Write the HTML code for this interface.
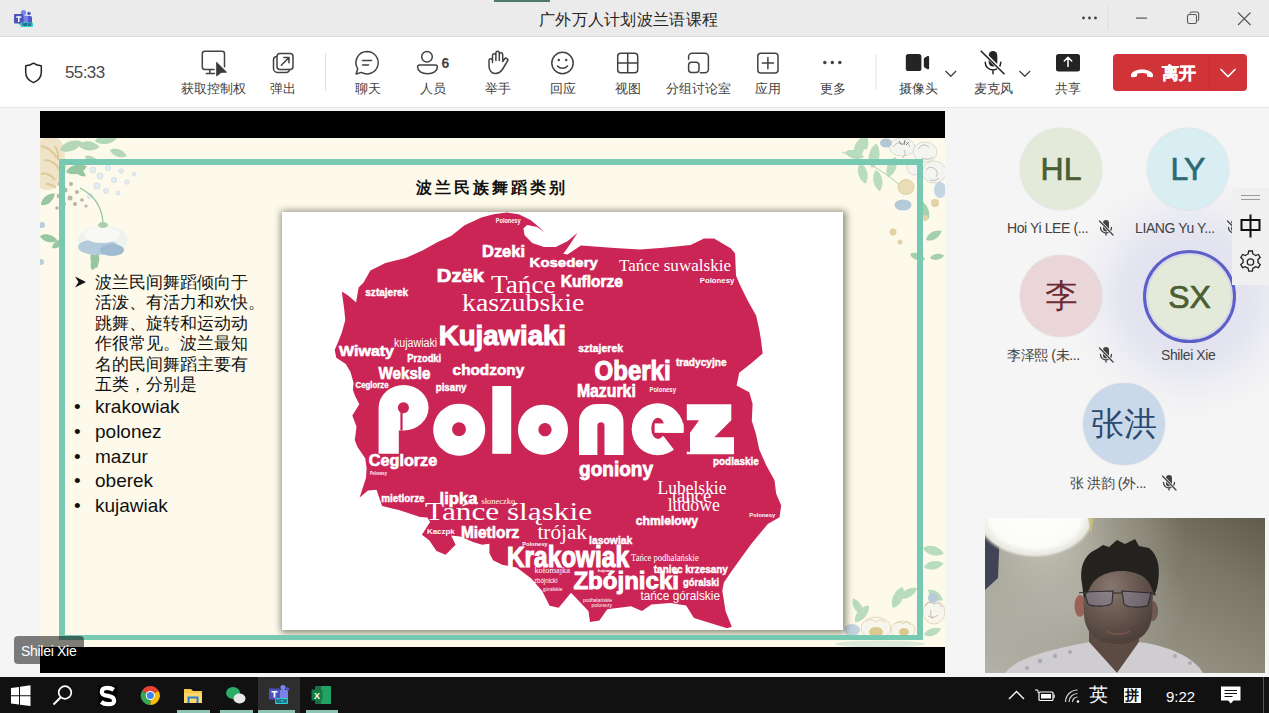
<!DOCTYPE html>
<html><head><meta charset="utf-8">
<style>
*{box-sizing:border-box;margin:0;padding:0}
html,body{width:1269px;height:713px;overflow:hidden}
body{position:relative;background:#f5f5f5;font-family:"Liberation Sans",sans-serif;color:#242424}
.abs{position:absolute}
#title{left:0;top:0;width:1269px;height:37px;background:#ebebeb;border-bottom:1px solid #dcdcdc}
#tbar{left:0;top:37px;width:1269px;height:71px;background:#fff;border-bottom:1px solid #e6e6e6}
.lbl{position:absolute;top:80px;font-size:13px;color:#424242;white-space:nowrap;transform:translateX(-50%);line-height:17px}
#task{left:0;top:677px;width:1269px;height:36px;background:#111}
.nm{position:absolute;font-size:14px;color:#424242;white-space:nowrap;line-height:16px;letter-spacing:-0.4px}
.av{position:absolute;border-radius:50%;text-align:center;box-shadow:0 0 2px rgba(0,0,0,0.12)}
</style></head>
<body>
<!-- title bar -->
<div id="title" class="abs">
  <div class="abs" style="left:494px;top:0;width:56px;height:1.5px;background:#4d7a6a"></div>
  <div class="abs" style="left:539px;top:9.5px;font-size:16px;color:#242424;letter-spacing:0.3px;line-height:20px">广外万人计划波兰语课程</div>
</div>
<svg class="abs" style="left:0;top:0" width="1269" height="37" viewBox="0 0 1269 37">
  <!-- teams logo -->
  <circle cx="23.5" cy="12.5" r="2.6" fill="#7b83eb"/>
  <circle cx="29" cy="13.5" r="1.8" fill="#5059c9"/>
  <rect x="25.5" y="16" width="6.5" height="8" rx="1.5" fill="#5059c9"/>
  <rect x="19" y="15.5" width="9" height="9.5" rx="1.5" fill="#7b83eb"/>
  <rect x="14" y="14" width="9.5" height="9.5" rx="1" fill="#4b53bc"/>
  <path d="M16.2,16.3h5.1v1.4h-1.8v4.3h-1.5v-4.3h-1.8z" fill="#fff"/>
  <rect x="20.5" y="22.5" width="12.5" height="4.6" rx="1" fill="#29d3c8"/>
  <text x="26.8" y="26.3" font-size="4" font-family="Liberation Sans" font-weight="bold" fill="#1b3a6b" text-anchor="middle">NEW</text>
  <!-- dots -->
  <circle cx="1083.5" cy="18" r="1.4" fill="#424242"/><circle cx="1089.5" cy="18" r="1.4" fill="#424242"/><circle cx="1095.5" cy="18" r="1.4" fill="#424242"/>
  <rect x="1107.5" y="6" width="1" height="24" fill="#dedede"/>
  <rect x="1136" y="17.5" width="11" height="1.2" fill="#5a5a5a"/>
  <rect x="1187.5" y="14.5" width="9" height="9" rx="1.8" fill="none" stroke="#5a5a5a" stroke-width="1.1"/>
  <path d="M1190,13.5 v-0.3 a1.5,1.5 0 0 1 1.5,-1.2 h5.2 a2,2 0 0 1 2,2 v5.2 a1.5,1.5 0 0 1 -1.2,1.5" fill="none" stroke="#5a5a5a" stroke-width="1.1"/>
  <path d="M1238,12.5 L1250.5,25 M1250.5,12.5 L1238,25" stroke="#5a5a5a" stroke-width="1.2"/>
</svg>

<!-- toolbar -->
<div id="tbar" class="abs"></div>
<div class="abs" style="left:65px;top:63px;font-size:17px;color:#4a4a4a;line-height:20px;letter-spacing:-0.6px">55:33</div>
<svg class="abs" style="left:0;top:37px" width="1269" height="70" viewBox="0 37 1269 70">
<g fill="none" stroke="#424242" stroke-width="1.5" stroke-linecap="round" stroke-linejoin="round">
  <!-- monitor -->
  <path d="M214,69.6 h-9.2 a2.5,2.5 0 0 1 -2.5,-2.5 v-13.3 a2.5,2.5 0 0 1 2.5,-2.5 h17.2 a2.5,2.5 0 0 1 2.5,2.5 v13"/>
  <path d="M209.8,70 v3.5 M206.3,73.6 h8"/>
  <!-- popout -->
  <rect x="277" y="53.5" width="16" height="16" rx="3"/>
  <path d="M276.5,56.5 a3.5,3.5 0 0 0 -3,3.5 v8.5 a4,4 0 0 0 4,4 h8.5 a3.5,3.5 0 0 0 3.5,-3"/>
  <path d="M281.3,65.3 l7.3,-7.3 M283.8,57.6 h5.2 v5.2"/>
  <!-- chat -->
  <path d="M367,51.5 a11.2,11.2 0 1 1 -5.6,20.9 l-5.3,1.6 1.6,-5.3 a11.2,11.2 0 0 1 9.3,-17.2 z"/>
  <path d="M362.5,60.5 h9 M362.5,65 h6"/>
  <!-- people -->
  <circle cx="427" cy="56.8" r="5.3"/>
  <path d="M417.6,67 a2,2 0 0 1 2,-2 h15.8 a2,2 0 0 1 2,2 c0,4 -4,6.7 -9.9,6.7 s-9.9,-2.7 -9.9,-6.7 z"/>
  <!-- hand -->
  <path transform="translate(2,0.5)" d="M490.5,62 v-7 a1.7,1.7 0 0 1 3.4,0 v5 M493.9,60 v-7.5 a1.7,1.7 0 0 1 3.4,0 v7.5 M497.3,60 v-6 a1.7,1.7 0 0 1 3.4,0 v6.5 M500.7,61 l1.8,-2.5 a1.8,1.8 0 0 1 3,2 l-4.5,7.5 c-2,3.5 -4,5 -7.5,5 h-0.5 c-3,0 -6,-3 -6,-7.5 v-5.5 a1.7,1.7 0 0 1 3.4,0"/>
  <!-- smiley -->
  <circle cx="562.5" cy="63" r="10.7"/>
  <path d="M557.5,66 a6.5,6.5 0 0 0 10,0"/></g><g fill="#424242"><circle cx="558.8" cy="60" r="1.2"/><circle cx="566.2" cy="60" r="1.2"/></g><g fill="none" stroke="#424242" stroke-width="1.5" stroke-linecap="round" stroke-linejoin="round">
  <!-- grid -->
  <rect x="617.7" y="53.2" width="20" height="19.6" rx="3"/>
  <path d="M627.7,53.5 v19 M618,63 h19.5"/>
  <!-- breakout -->
  <path d="M688.6,59.3 v-2.6 a3.5,3.5 0 0 1 3.5,-3.5 h12.8 a3.5,3.5 0 0 1 3.5,3.5 v12.6 a3.5,3.5 0 0 1 -3.5,3.5 h-4.6"/>
  <rect x="688.6" y="62.2" width="10.4" height="10.4" rx="3"/>
  <!-- apps -->
  <rect x="757.8" y="53.2" width="20.2" height="19.8" rx="3"/>
  <path d="M767.9,57.5 v11.2 M762.3,63.1 h11.2"/>
</g>
<text x="441.5" y="68" font-size="14" font-weight="bold" font-family="Liberation Sans" fill="#424242">6</text>
<path d="M216.6,62.3 L226.6,72.2 L221.3,72.4 L216.6,76 Z" fill="#3a3a3a" stroke="#3a3a3a" stroke-width="0.8" stroke-linejoin="round"/>
<circle cx="824.8" cy="62.5" r="1.75" fill="#424242"/><circle cx="832.3" cy="62.5" r="1.75" fill="#424242"/><circle cx="839.8" cy="62.5" r="1.75" fill="#424242"/>
<rect x="325" y="53.5" width="1" height="37" fill="#e0e0e0"/>
<rect x="875.5" y="54" width="1" height="36" fill="#e0e0e0"/>
<!-- camera -->
<rect x="905.8" y="54" width="15.6" height="17.1" rx="2.6" fill="#242424"/>
<path d="M923.8,59 a1.5,1.5 0 0 1 0.8,-1.3 l3,-1.6 a1,1 0 0 1 1.5,0.9 v11.3 a1,1 0 0 1 -1.5,0.9 l-3,-1.6 a1.5,1.5 0 0 1 -0.8,-1.3 z" fill="#242424"/>
<path d="M945.5,71 l5.3,5.3 5.3,-5.3" fill="none" stroke="#424242" stroke-width="1.3"/>
<!-- mic off -->
<rect x="988.7" y="51.1" width="8.6" height="15.5" rx="4.3" fill="#242424"/>
<path d="M985.2,62.2 a7.8,7.8 0 0 0 15.6,0 M993,70.2 v3.6" fill="none" stroke="#242424" stroke-width="1.5" stroke-linecap="round"/>
<path d="M982.3,51.5 l22.5,22.5" stroke="#fff" stroke-width="3.2"/>
<path d="M981.2,51.2 l22.8,22.6" stroke="#242424" stroke-width="1.6" stroke-linecap="round"/>
<path d="M1019.5,71 l5.3,5.3 5.3,-5.3" fill="none" stroke="#424242" stroke-width="1.3"/>
<!-- share -->
<rect x="1056" y="54" width="24" height="17.5" rx="2.5" fill="#242424"/>
<path d="M1068,66.5 v-9 M1064.3,61 l3.7,-3.7 3.7,3.7" fill="none" stroke="#fff" stroke-width="1.5" stroke-linecap="round" stroke-linejoin="round"/>
<!-- leave -->
<rect x="1113" y="54" width="134" height="37" rx="4" fill="#d13438"/>
<rect x="1209" y="54" width="1" height="37" fill="#c02d35"/>
<path d="M1131,75 c0,-3 5,-5.5 11,-5.5 s11,2.5 11,5.5 v1 a1.3,1.3 0 0 1 -1.5,1.3 l-3.5,-0.6 a1.3,1.3 0 0 1 -1.1,-1.4 v-1.5 c-1.5,-0.6 -3,-0.8 -4.9,-0.8 s-3.4,0.2 -4.9,0.8 v1.5 a1.3,1.3 0 0 1 -1.1,1.4 l-3.5,0.6 a1.3,1.3 0 0 1 -1.5,-1.3 z" fill="#fff"/>
<path d="M1220.5,69 l7.5,7.5 7.5,-7.5" fill="none" stroke="#fff" stroke-width="1.6"/>
</svg>
<div class="abs" style="left:1162px;top:63.5px;font-size:17px;font-weight:bold;color:#fff;line-height:20px;-webkit-text-stroke:0.4px #fff">离开</div>
<div class="lbl" style="left:213px">获取控制权</div>
<div class="lbl" style="left:283px">弹出</div>
<div class="lbl" style="left:368px">聊天</div>
<div class="lbl" style="left:433px">人员</div>
<div class="lbl" style="left:498px">举手</div>
<div class="lbl" style="left:563px">回应</div>
<div class="lbl" style="left:628px">视图</div>
<div class="lbl" style="left:698px">分组讨论室</div>
<div class="lbl" style="left:768px">应用</div>
<div class="lbl" style="left:833px">更多</div>
<div class="lbl" style="left:918px">摄像头</div>
<div class="lbl" style="left:993px">麦克风</div>
<div class="lbl" style="left:1068px">共享</div>
<svg class="abs" style="left:24px;top:62px" width="20" height="22" viewBox="0 0 20 22"><path d="M9.5,1.2 c2.5,1.8 5,2.5 7.8,2.6 v6.5 c0,5 -3,8.5 -7.8,10.3 c-4.8,-1.8 -7.8,-5.3 -7.8,-10.3 v-6.5 c2.8,-0.1 5.3,-0.8 7.8,-2.6 z" fill="none" stroke="#242424" stroke-width="1.5" stroke-linejoin="round"/></svg>

<!-- right panel glow -->
<div class="abs" style="left:1069px;top:176px;width:240px;height:240px;border-radius:50%;background:radial-gradient(circle at 50% 50%,rgba(205,205,235,0.7) 0,rgba(215,215,238,0.5) 40%,rgba(230,230,242,0.25) 60%,rgba(245,245,245,0) 72%)"></div>
<!-- stage slide -->
<div class="abs" style="left:40px;top:111px;width:905px;height:562px;background:#000"></div>
<div class="abs" id="slide" style="left:40px;top:138px;width:905px;height:509px;background:#fdfaeb;overflow:hidden">
<svg class="abs" style="left:-40px;top:-138px" width="1269" height="713" viewBox="0 0 1269 713">
<defs>
 <path id="lf" d="M0,0 C4,-5 13,-5 18,0 C13,5 4,5 0,0 Z"/>
 <path id="pt" d="M0,0 C-6,-4 -6,-14 0,-18 C6,-14 6,-4 0,0 Z"/>
</defs>
<!-- top-left cluster -->
<g>
 <g fill="#efe4c7">
  <ellipse cx="50" cy="152" rx="15" ry="16"/>
  <ellipse cx="47" cy="176" rx="14" ry="14"/>
  <ellipse cx="58" cy="165" rx="9" ry="12"/>
 </g>
 <path d="M41,146 q10,2 16,12 M44,160 q10,0 16,10 M41,174 q8,-2 14,6 M46,184 q6,0 10,4 M55,146 q4,6 3,14" stroke="#d8c38c" stroke-width="2" fill="none" opacity="0.8"/>
 <g fill="#acd4b2" opacity="0.9">
  <use href="#lf" transform="translate(60,150) rotate(-20) scale(1.3)"/>
  <use href="#lf" transform="translate(78,145) rotate(5) scale(1.2)"/>
  <use href="#lf" transform="translate(95,141) rotate(-10) scale(1.3)"/>
  <use href="#lf" transform="translate(110,150) rotate(20) scale(1)"/>
  <use href="#lf" transform="translate(85,156) rotate(30) scale(0.9)"/>
 </g>
 <g fill="#98c6a0">
  <use href="#lf" transform="translate(66,172) rotate(-15) scale(1.2)"/>
  <use href="#lf" transform="translate(74,168) rotate(35) scale(0.8)"/>
  <use href="#lf" transform="translate(41,205) rotate(-40) scale(1)"/>
  <use href="#lf" transform="translate(40,236) rotate(15) scale(1)"/>
  <use href="#lf" transform="translate(52,248) rotate(-35) scale(0.8)"/>
  <use href="#lf" transform="translate(92,270) rotate(-70) scale(1)"/>
  <use href="#lf" transform="translate(97,268) rotate(-110) scale(0.9)"/>
 </g>
 <g fill="#a6a39b" opacity="0.8">
  <circle cx="60" cy="184" r="2.2"/><circle cx="65" cy="190" r="2.5"/><circle cx="71" cy="184" r="2"/><circle cx="59" cy="196" r="2.3"/><circle cx="70" cy="198" r="2.5"/><circle cx="77" cy="192" r="2"/><circle cx="64" cy="204" r="2"/><circle cx="75" cy="204" r="2"/><circle cx="82" cy="200" r="1.8"/><circle cx="86" cy="206" r="1.6"/><circle cx="57" cy="208" r="1.8"/>
 </g>
 <g fill="#e4edf2" stroke="#cbd9e3" stroke-width="0.7">
  <circle cx="93" cy="170" r="3"/><circle cx="100" cy="176" r="3"/><circle cx="108" cy="168" r="2.6"/><circle cx="97" cy="186" r="3"/><circle cx="114" cy="180" r="2.6"/><circle cx="121" cy="171" r="2.2"/><circle cx="106" cy="191" r="2.5"/><circle cx="127" cy="182" r="2.2"/><circle cx="118" cy="193" r="2"/><circle cx="134" cy="174" r="2"/><circle cx="90" cy="196" r="2.5"/>
 </g>
 <path d="M80,188 C94,195 102,206 103,223" stroke="#90c29b" stroke-width="1.2" fill="none"/>
 <g>
  <ellipse cx="103" cy="240" rx="25" ry="14" fill="#eef3f1"/>
  <use href="#pt" transform="translate(96,252) rotate(-30)" fill="#f4f6f3"/>
  <use href="#pt" transform="translate(106,252) rotate(20)" fill="#f1f4f1"/>
  <ellipse cx="98" cy="247" rx="20" ry="8" fill="#b4cbdc"/>
  <ellipse cx="112" cy="250" rx="12" ry="6" fill="#9fbbd0"/>
  <ellipse cx="102" cy="235" rx="18" ry="8" fill="#f8f9f5"/>
  <ellipse cx="103" cy="225" rx="5" ry="3" fill="#a9cfae"/>
 </g>
 <g fill="#b8cfe0"><circle cx="42" cy="225" r="3"/><circle cx="41" cy="262" r="3"/></g>
</g>
<!-- top-right cluster -->
<g>
 <path d="M842,152 C860,160 880,166 905,190" stroke="#a9cfae" stroke-width="1" fill="none"/>
 <g fill="#b3d9ba" opacity="0.9">
  <use href="#lf" transform="translate(845,152) rotate(15) scale(1.1)"/>
  <use href="#lf" transform="translate(856,160) rotate(-75) scale(1.3)"/>
  <use href="#lf" transform="translate(860,163) rotate(75) scale(1.2)"/>
  <use href="#lf" transform="translate(872,168) rotate(-80) scale(1.4)"/>
  <use href="#lf" transform="translate(876,170) rotate(80) scale(1.2)"/>
  <use href="#lf" transform="translate(888,177) rotate(-70) scale(1.2)"/>
  <use href="#lf" transform="translate(866,150) rotate(-100) scale(1)"/>
 </g>
 <g fill="#a6d0ad">
  <use href="#lf" transform="translate(918,200) rotate(60) scale(1.2)"/>
  <use href="#lf" transform="translate(926,240) rotate(-30) scale(1)"/>
  <use href="#lf" transform="translate(910,254) rotate(20) scale(0.9)"/>
  <use href="#lf" transform="translate(930,258) rotate(-10) scale(0.8)"/>
 </g>
 <g fill="#f4f5f1" stroke="#cfd3cd" stroke-width="0.8">
  <ellipse cx="902" cy="147" rx="13" ry="9"/>
  <ellipse cx="925" cy="152" rx="12" ry="10"/>
  <ellipse cx="934" cy="172" rx="12" ry="11"/>
  <ellipse cx="915" cy="168" rx="8" ry="7"/>
 </g>
 <path d="M893,147 q4,-6 9,-3 q5,-4 8,3 M904,150 q3,5 -2,8 M918,149 q5,-7 11,-2 M922,158 q6,3 11,-1 M926,170 q4,-5 9,-1 q4,3 1,8 M930,180 q5,2 9,-2" stroke="#a9a79f" stroke-width="0.7" fill="none"/><path d="M899,141 l3,4 M905,140 l-1,5 M909,142 l-3,3" stroke="#7f7d77" stroke-width="1"/>
 <ellipse cx="886" cy="143" rx="6" ry="4.5" fill="#b4c6d4"/>
 <ellipse cx="940" cy="190" rx="6" ry="8" fill="#c3d4e2"/>
 <ellipse cx="906" cy="187" rx="8" ry="7.5" fill="#e9ddb8" stroke="#d5c390" stroke-width="0.7"/>
 <ellipse cx="903" cy="205" rx="8.5" ry="5.5" fill="#b6cad9"/>
 <g fill="#e3d3a4"><circle cx="935" cy="203" r="4"/><circle cx="925" cy="218" r="3"/><circle cx="893" cy="232" r="3.5"/><circle cx="900" cy="242" r="2.5"/></g>
</g>
<!-- bottom-right cluster -->
<g>
 <g fill="#b3d9ba" opacity="0.9">
  <use href="#lf" transform="translate(855,622) rotate(-50) scale(1.2)"/>
  <use href="#lf" transform="translate(862,614) rotate(-120) scale(1)"/>
  <use href="#lf" transform="translate(893,608) rotate(-65) scale(1.3)"/>
  <use href="#lf" transform="translate(900,598) rotate(-30) scale(1.1)"/>
  <use href="#lf" transform="translate(923,548) rotate(15) scale(1.2)"/>
  <use href="#lf" transform="translate(924,567) rotate(-10) scale(1.1)"/>
  <use href="#lf" transform="translate(928,590) rotate(35) scale(1)"/>
  <use href="#lf" transform="translate(924,635) rotate(-20) scale(1)"/>
 </g>
 <g fill="#f7f5ec" stroke="#ddd3b0" stroke-width="0.8">
  <ellipse cx="876" cy="628" rx="15" ry="11"/>
  <ellipse cx="903" cy="630" rx="12" ry="9"/>
  <ellipse cx="934" cy="612" rx="11" ry="12"/>
 </g>
 <path d="M925,606 q4,-6 9,-2 q5,-3 8,3 M928,616 q5,3 10,-1 M931,610 q-2,5 2,9" stroke="#a9a79f" stroke-width="0.7" fill="none"/><path d="M866,622 q5,-5 10,0 q5,-5 10,1 M895,624 q4,-4 8,0 q4,-4 8,1" stroke="#d5c79c" stroke-width="0.7" fill="none"/>
 <ellipse cx="876" cy="632" rx="7" ry="5" fill="#dcc98f"/>
 <ellipse cx="904" cy="632" rx="5" ry="4" fill="#dcc98f"/>
 <ellipse cx="852" cy="630" rx="8" ry="6" fill="#c3d4e0"/>
 <ellipse cx="933" cy="598" rx="5" ry="5" fill="#b9cad8"/>
 <ellipse cx="880" cy="644" rx="45" ry="3.5" fill="#cfe3d2" opacity="0.7"/>
</g>
</svg>

</div>
<div class="abs" style="left:416px;top:178px;font-family:'Liberation Serif',serif;font-weight:bold;font-size:16px;letter-spacing:3px;line-height:20px;color:#111">波兰民族舞蹈类别</div>
<div class="abs" style="left:282px;top:212px;width:561px;height:418px;background:#fff;box-shadow:1px 1px 7px 2px rgba(70,70,50,0.62)"></div>
<div class="abs" style="left:59px;top:159px;width:864px;height:481px;border:6px solid #78c9b1;border-bottom-width:5px"></div>
<div class="abs" style="left:95px;top:273px;width:175px;font-size:17px;line-height:20.4px;color:#111">波兰民间舞蹈倾向于<br>活泼、有活力和欢快。<br>跳舞、旋转和运动动<br>作很常见。波兰最知<br>名的民间舞蹈主要有<br>五类，分别是</div>
<svg class="abs" style="left:74px;top:275px" width="13" height="14" viewBox="0 0 13 14"><path d="M1,1.5 L12,7 L1,12.5 L4.5,7 Z" fill="#111"/></svg>
<div class="abs" style="left:74px;top:395px;font-size:19px;line-height:24.8px;color:#111">
<div style="position:relative;padding-left:21px"><span style="position:absolute;left:0;top:0">•</span>krakowiak</div>
<div style="position:relative;padding-left:21px"><span style="position:absolute;left:0;top:0">•</span>polonez</div>
<div style="position:relative;padding-left:21px"><span style="position:absolute;left:0;top:0">•</span>mazur</div>
<div style="position:relative;padding-left:21px"><span style="position:absolute;left:0;top:0">•</span>oberek</div>
<div style="position:relative;padding-left:21px"><span style="position:absolute;left:0;top:0">•</span>kujawiak</div>
</div>

<svg class="abs" style="left:0;top:0" width="1269" height="713" viewBox="0 0 1269 713">
<path d="M341.8,291.6 L348.5,295.8 L356.1,302.6 L358.6,287.4 L363.6,282.4 L370.4,270.6 L385.5,263.0 L405.7,258.0 L422.5,250.4 L437.7,242.0 L451.1,236.1 L464.6,225.2 L481.4,217.6 L493.5,214.3 L506.9,212.6 L518.7,214.3 L530.5,220.1 L538.9,226.9 L544.8,232.8 L537.2,226.9 L527.1,224.9 L523.4,228.6 L524.6,235.3 L532.2,242.9 L543.9,247.1 L555.7,247.1 L567.5,241.2 L577.6,232.8 L569.2,245.4 L563.3,253.8 L567.5,254.6 L580.9,245.4 L597.8,246.7 L614.6,247.9 L640.0,249.6 L663.6,247.7 L690.6,245.1 L704.0,238.4 L714.1,238.4 L731.0,248.5 L735.1,253.6 L736.0,275.4 L739.4,283.8 L747.8,300.7 L756.2,315.8 L759.5,331.0 L761.0,340.0 L762.7,353.5 L751.0,363.6 L739.2,372.8 L736.6,385.4 L749.3,392.2 L752.6,404.0 L751.8,420.8 L756.0,434.2 L759.4,450.0 L766.1,465.1 L774.5,480.3 L776.2,493.7 L781.2,505.5 L779.5,517.3 L767.8,524.0 L751.0,544.2 L732.4,570.0 L723.9,582.6 L722.3,590.4 L725.5,610.9 L731.8,626.7 L727.1,628.3 L694.0,618.0 L686.1,605.4 L670.3,603.0 L651.4,604.6 L642.0,610.9 L630.9,606.2 L607.3,609.3 L599.4,620.4 L590.0,622.0 L588.4,610.9 L571.0,592.8 L558.7,607.7 L549.6,605.8 L542.3,591.3 L531.3,578.5 L516.7,567.5 L502.1,564.8 L493.0,560.2 L489.4,553.0 L489.4,543.8 L482.1,544.7 L473.0,542.0 L460.2,536.5 L451.1,535.6 L455.6,544.7 L445.6,554.8 L436.5,551.1 L429.2,540.2 L421.9,534.7 L430.1,522.0 L427.4,517.4 L420.0,517.1 L398.9,510.1 L382.1,505.9 L376.5,489.8 L368.0,490.5 L359.6,497.5 L366.0,477.9 L366.6,468.0 L365.2,458.2 L357.5,447.0 L354.7,440.0 L355.1,437.9 L356.5,426.7 L352.3,415.4 L359.3,404.2 L355.1,396.0 L352.9,390.0 L353.6,383.0 L350.5,372.0 L345.8,364.0 L336.3,357.8 L334.7,350.0 L338.7,340.5 L341.8,332.6 L345.3,320.0 L344.3,310.0Z" fill="#cb2556"/>
<g fill="#fff">
<text x="495.8" y="223" font-size="6.5" font-family="Liberation Sans" font-weight="bold" textLength="24.7" lengthAdjust="spacingAndGlyphs">Polonesy</text>
<text x="482" y="257.4" font-size="17" font-family="Liberation Sans" font-weight="bold" stroke="#fff" stroke-width="0.68" textLength="43.0" lengthAdjust="spacingAndGlyphs">Dzeki</text>
<text x="529.6" y="266.5" font-size="13" font-family="Liberation Sans" font-weight="bold" stroke="#fff" stroke-width="0.52" textLength="68.2" lengthAdjust="spacingAndGlyphs">Kosedery</text>
<text x="436.8" y="281.5" font-size="18.6" font-family="Liberation Sans" font-weight="bold" stroke="#fff" stroke-width="0.74" textLength="47.2" lengthAdjust="spacingAndGlyphs">Dzëk</text>
<text x="491" y="292.5" font-size="25" font-family="Liberation Serif" textLength="64.7" lengthAdjust="spacingAndGlyphs">Tańce</text>
<text x="462" y="311" font-size="25" font-family="Liberation Serif" textLength="122.3" lengthAdjust="spacingAndGlyphs">kaszubskie</text>
<text x="560.8" y="286.6" font-size="17" font-family="Liberation Sans" font-weight="bold" stroke="#fff" stroke-width="0.68" textLength="62.2" lengthAdjust="spacingAndGlyphs">Kuflorze</text>
<text x="619" y="271.2" font-size="17.5" font-family="Liberation Serif" textLength="112.0" lengthAdjust="spacingAndGlyphs">Tańce suwalskie</text>
<text x="699.8" y="282.5" font-size="7.5" font-family="Liberation Sans" font-weight="bold" textLength="34.5" lengthAdjust="spacingAndGlyphs">Polonesy</text>
<text x="365.3" y="296" font-size="10" font-family="Liberation Sans" font-weight="bold" stroke="#fff" stroke-width="0.40" textLength="42.9" lengthAdjust="spacingAndGlyphs">sztajerek</text>
<text x="438.8" y="345" font-size="27" font-family="Liberation Sans" font-weight="bold" stroke="#fff" stroke-width="1.08" textLength="127.2" lengthAdjust="spacingAndGlyphs">Kujawiaki</text>
<text x="394" y="346.5" font-size="12" font-family="Liberation Sans" textLength="43.2" lengthAdjust="spacingAndGlyphs">kujawiaki</text>
<text x="339.1" y="356" font-size="15" font-family="Liberation Sans" font-weight="bold" stroke="#fff" stroke-width="0.60" textLength="54.9" lengthAdjust="spacingAndGlyphs">Wiwaty</text>
<text x="407.3" y="362.3" font-size="11.5" font-family="Liberation Sans" font-weight="bold" stroke="#fff" stroke-width="0.46" textLength="33.9" lengthAdjust="spacingAndGlyphs">Przodki</text>
<text x="378.6" y="379.3" font-size="17" font-family="Liberation Sans" font-weight="bold" stroke="#fff" stroke-width="0.68" textLength="51.8" lengthAdjust="spacingAndGlyphs">Weksle</text>
<text x="452.6" y="375" font-size="15.5" font-family="Liberation Sans" font-weight="bold" stroke="#fff" stroke-width="0.62" textLength="71.6" lengthAdjust="spacingAndGlyphs">chodzony</text>
<text x="355.5" y="387.6" font-size="9" font-family="Liberation Sans" font-weight="bold" stroke="#fff" stroke-width="0.36" textLength="33.0" lengthAdjust="spacingAndGlyphs">Ceglorze</text>
<text x="435.7" y="391" font-size="11" font-family="Liberation Sans" font-weight="bold" stroke="#fff" stroke-width="0.44" textLength="30.8" lengthAdjust="spacingAndGlyphs">pisany</text>
<text x="578.3" y="352" font-size="11" font-family="Liberation Sans" font-weight="bold" stroke="#fff" stroke-width="0.44" textLength="44.7" lengthAdjust="spacingAndGlyphs">sztajerek</text>
<text x="594.6" y="380.4" font-size="27" font-family="Liberation Sans" font-weight="bold" stroke="#fff" stroke-width="1.08" textLength="76.0" lengthAdjust="spacingAndGlyphs">Oberki</text>
<text x="675.9" y="365.5" font-size="10" font-family="Liberation Sans" font-weight="bold" stroke="#fff" stroke-width="0.40" textLength="50.8" lengthAdjust="spacingAndGlyphs">tradycyjne</text>
<text x="576.9" y="396.8" font-size="17.5" font-family="Liberation Sans" font-weight="bold" stroke="#fff" stroke-width="0.70" textLength="58.9" lengthAdjust="spacingAndGlyphs">Mazurki</text>
<text x="649.5" y="391.5" font-size="7" font-family="Liberation Sans" font-weight="bold" textLength="26.5" lengthAdjust="spacingAndGlyphs">Polonesy</text>
<text x="368.8" y="466" font-size="16" font-family="Liberation Sans" font-weight="bold" stroke="#fff" stroke-width="0.64" textLength="68.4" lengthAdjust="spacingAndGlyphs">Ceglorze</text>
<text x="370" y="475" font-size="5" font-family="Liberation Sans" font-weight="bold" textLength="16.8" lengthAdjust="spacingAndGlyphs">Polonesy</text>
<text x="579" y="476" font-size="20" font-family="Liberation Sans" font-weight="bold" stroke="#fff" stroke-width="0.80" textLength="74.0" lengthAdjust="spacingAndGlyphs">goniony</text>
<text x="713" y="465" font-size="11" font-family="Liberation Sans" font-weight="bold" stroke="#fff" stroke-width="0.44" textLength="45.7" lengthAdjust="spacingAndGlyphs">podlaskie</text>
<text x="657.6" y="493.7" font-size="19" font-family="Liberation Serif" textLength="68.9" lengthAdjust="spacingAndGlyphs">Lubelskie</text>
<text x="671.9" y="502" font-size="18" font-family="Liberation Serif" textLength="39.5" lengthAdjust="spacingAndGlyphs">tance</text>
<text x="667.7" y="511.4" font-size="18" font-family="Liberation Serif" textLength="52.1" lengthAdjust="spacingAndGlyphs">ludowe</text>
<text x="635.7" y="524.5" font-size="13" font-family="Liberation Sans" font-weight="bold" stroke="#fff" stroke-width="0.52" textLength="62.3" lengthAdjust="spacingAndGlyphs">chmielowy</text>
<text x="749.3" y="516.5" font-size="6" font-family="Liberation Sans" font-weight="bold" textLength="26.0" lengthAdjust="spacingAndGlyphs">Polonesy</text>
<text x="381.3" y="502" font-size="10" font-family="Liberation Sans" font-weight="bold" stroke="#fff" stroke-width="0.40" textLength="43.3" lengthAdjust="spacingAndGlyphs">mietlorze</text>
<text x="439.6" y="504" font-size="16" font-family="Liberation Sans" font-weight="bold" stroke="#fff" stroke-width="0.64" textLength="37.8" lengthAdjust="spacingAndGlyphs">lipka</text>
<text x="481.4" y="503.6" font-size="9" font-family="Liberation Serif" textLength="33.8" lengthAdjust="spacingAndGlyphs">słoneczko</text>
<text x="425" y="520" font-size="26" font-family="Liberation Serif" textLength="167.0" lengthAdjust="spacingAndGlyphs">Tańce śląskie</text>
<text x="427" y="533.5" font-size="8" font-family="Liberation Sans" font-weight="bold" textLength="27.6" lengthAdjust="spacingAndGlyphs">Kaczpk</text>
<text x="460.9" y="537.5" font-size="16.5" font-family="Liberation Sans" font-weight="bold" stroke="#fff" stroke-width="0.66" textLength="58.3" lengthAdjust="spacingAndGlyphs">Mietlorz</text>
<text x="537.4" y="539" font-size="21" font-family="Liberation Serif" textLength="49.6" lengthAdjust="spacingAndGlyphs">trójak</text>
<text x="522.3" y="546" font-size="6" font-family="Liberation Sans" font-weight="bold" textLength="25.2" lengthAdjust="spacingAndGlyphs">Polonesy</text>
<text x="507" y="567" font-size="29" font-family="Liberation Sans" font-weight="bold" stroke="#fff" stroke-width="1.16" textLength="122.0" lengthAdjust="spacingAndGlyphs">Krakowiak</text>
<text x="589" y="544" font-size="11" font-family="Liberation Sans" font-weight="bold" stroke="#fff" stroke-width="0.44" textLength="43.4" lengthAdjust="spacingAndGlyphs">lasowiak</text>
<text x="631" y="560.5" font-size="10" font-family="Liberation Serif" textLength="67.7" lengthAdjust="spacingAndGlyphs">Tańce podhalańskie</text>
<text x="534.4" y="573" font-size="9" font-family="Liberation Serif" textLength="35.6" lengthAdjust="spacingAndGlyphs">kołomajka</text>
<text x="534" y="583" font-size="7" font-family="Liberation Sans" textLength="23.5" lengthAdjust="spacingAndGlyphs">zbójnicki</text>
<text x="542.8" y="591" font-size="6" font-family="Liberation Sans" textLength="19.8" lengthAdjust="spacingAndGlyphs">góralskie</text>
<text x="597.8" y="572.3" font-size="4" font-family="Liberation Sans" font-weight="bold" textLength="14.2" lengthAdjust="spacingAndGlyphs">hajnan</text>
<text x="653.8" y="573" font-size="11" font-family="Liberation Sans" font-weight="bold" stroke="#fff" stroke-width="0.44" textLength="74.0" lengthAdjust="spacingAndGlyphs">taniec krzesany</text>
<text x="573.4" y="589" font-size="23" font-family="Liberation Sans" font-weight="bold" stroke="#fff" stroke-width="0.92" textLength="105.6" lengthAdjust="spacingAndGlyphs">Zbójnicki</text>
<text x="683" y="585.5" font-size="11" font-family="Liberation Sans" font-weight="bold" stroke="#fff" stroke-width="0.44" textLength="36.2" lengthAdjust="spacingAndGlyphs">góralski</text>
<text x="640.4" y="600" font-size="12" font-family="Liberation Sans" textLength="79.6" lengthAdjust="spacingAndGlyphs">tańce góralskie</text>
<text x="582.9" y="601.5" font-size="5" font-family="Liberation Sans" textLength="29.1" lengthAdjust="spacingAndGlyphs">podhalańskie</text>
<text x="591.5" y="606.5" font-size="5" font-family="Liberation Sans" textLength="20.5" lengthAdjust="spacingAndGlyphs">polonezy</text>
</g>
<g fill="#fff">
<path fill-rule="evenodd" d="M378.6,453.8 L378.6,407.7 A25,22.7 0 1 1 403.6,430.4 L398.8,430.4 L398.8,453.8 Z M403.4,402.2 a5.5,5.5 0 1 0 0.01,0 Z"/>
<rect x="400.4" y="407" width="2.2" height="23.4" fill="#cb2556"/>
<path fill-rule="evenodd" d="M459.2,403.7 a26,26 0 1 0 0.01,0 Z M459,422.3 a6.9,6.9 0 1 1 -0.01,0 Z"/>
<rect x="492.3" y="386" width="18.9" height="67.8"/>
<path fill-rule="evenodd" d="M543,404.7 a25,25 0 1 0 0.01,0 Z M545,423.1 a6.6,6.6 0 1 1 -0.01,0 Z"/>
<path d="M579,455 L579,422 A18,18 0 0 1 597,404 L605.5,404 A18,18 0 0 1 623.5,422 L623.5,455 L604.5,455 L604.5,425.7 A3.55,3.55 0 0 0 597.4,425.7 L597.4,455 Z"/>
<circle cx="657.7" cy="429.3" r="26"/>
<path d="M686.8,404.2 L731.3,404.2 L731.3,420.3 L714.3,437.3 L734,437.3 L734,454.3 L686.8,454.3 L686.8,437.3 L699.1,420.3 L686.8,420.3 Z"/>
</g>
<ellipse cx="658" cy="428.4" rx="6.7" ry="10.7" fill="#cb2556"/>
<path d="M660,432.8 L690,432.8 L690,452 L674,449.8 L664.6,437.6 Z" fill="#cb2556"/>
<rect x="654.6" y="423.4" width="28.9" height="9.4" fill="#fff"/>

</svg>
<div class="av" style="left:1020px;top:128px;width:82px;height:82px;background:#e4ead9;color:#4a5e33;font-size:32px;-webkit-text-stroke:0.7px #4a5e33;line-height:83px">HL</div>
<div class="av" style="left:1147px;top:128px;width:82px;height:82px;background:#d9eef2;color:#2e6b74;font-size:32px;-webkit-text-stroke:0.7px #2e6b74;line-height:83px;letter-spacing:-2px;text-indent:-2px">LY</div>
<div class="av" style="left:1020px;top:255px;width:82px;height:82px;background:#ead5d9;color:#6b2a36;font-size:33px;line-height:82px">李</div>
<div class="abs" style="left:1143px;top:250px;width:93px;height:93px;border-radius:50%;border:3px solid #5b5fc7;background:#d8d8e6"></div>
<div class="av" style="left:1148px;top:255px;width:83px;height:83px;background:#e4ead9;color:#4a5e33;font-size:32px;-webkit-text-stroke:0.7px #4a5e33;line-height:84px;box-shadow:none">SX</div>
<div class="av" style="left:1083px;top:383px;width:82px;height:82px;background:#cad9ea;color:#2c4a70;font-size:33px;line-height:82px">张洪</div>
<div class="nm" style="left:1007px;top:220px">Hoi Yi LEE (...</div>
<div class="nm" style="left:1135px;top:220px">LIANG Yu Y...</div>
<div class="nm" style="left:1007px;top:347px">李泽熙 (未...</div>
<div class="nm" style="left:1161px;top:347px">Shilei Xie</div>
<div class="nm" style="left:1070px;top:475px">张 洪韵 (外...</div>
<svg class="abs" style="left:0;top:0" width="1269" height="713" viewBox="0 0 1269 713">
 <defs><g id="micoff">
  <path d="M4,2.5 a3,3 0 0 1 6,0 v5.5 a3,3 0 0 1 -6,0 z" fill="#424242"/>
  <path d="M1.5,7 a5.5,5.5 0 0 0 11,0 M7,12.5 v2" fill="none" stroke="#424242" stroke-width="1.3" stroke-linecap="round"/>
  <path d="M0.5,0.5 l13.5,14" stroke="#f5f5f5" stroke-width="2.6"/>
  <path d="M0.5,0.5 l13.5,14" stroke="#424242" stroke-width="1.3" stroke-linecap="round"/>
 </g></defs>
 <use href="#micoff" x="1099" y="220.5"/>
 <use href="#micoff" x="1099" y="347.5"/>
 <use href="#micoff" x="1162" y="475.5"/>
 <use href="#micoff" x="1227" y="220.5"/>
</svg>
<div class="abs" style="left:1232px;top:188px;width:37px;height:97px;background:#f0f0f0"></div>
<svg class="abs" style="left:1232px;top:188px" width="37" height="97" viewBox="1232 188 37 97">
 <path d="M1241,195.5 h19 M1241,199.5 h19" stroke="#9a9a9a" stroke-width="1"/>
 <path d="M1241.5,220 h18 v10 h-18 z M1250.5,214.5 v23" fill="none" stroke="#111" stroke-width="2"/>
 <g transform="translate(1250.5,262)" fill="none" stroke="#222" stroke-width="1.3">
  <path d="M-1.8,-11 h3.6 l0.6,3 a8,8 0 0 1 2.6,1.5 l2.9,-1 1.8,3.1 -2.3,2 a8,8 0 0 1 0,3 l2.3,2 -1.8,3.1 -2.9,-1 a8,8 0 0 1 -2.6,1.5 l-0.6,3 h-3.6 l-0.6,-3 a8,8 0 0 1 -2.6,-1.5 l-2.9,1 -1.8,-3.1 2.3,-2 a8,8 0 0 1 0,-3 l-2.3,-2 1.8,-3.1 2.9,1 a8,8 0 0 1 2.6,-1.5 z"/>
  <circle r="3.2"/>
 </g>
</svg>

<svg class="abs" style="left:985px;top:518px" width="280" height="155" viewBox="0 0 280 155">
<defs>
 <linearGradient id="vbg" x1="0" y1="1" x2="1" y2="0">
  <stop offset="0" stop-color="#b6b4aa"/><stop offset="0.4" stop-color="#939082"/><stop offset="0.75" stop-color="#7a7767"/><stop offset="1" stop-color="#5f5c4d"/>
 </linearGradient>
 <radialGradient id="vlight" cx="0.28" cy="0.55" r="0.45">
  <stop offset="0" stop-color="#b5b4ab" stop-opacity="0.7"/><stop offset="1" stop-color="#b5b4ab" stop-opacity="0"/>
 </radialGradient>
 <radialGradient id="lamp" cx="0.5" cy="0.4" r="0.55">
  <stop offset="0" stop-color="#ffffff"/><stop offset="0.75" stop-color="#fbfbf8"/><stop offset="0.92" stop-color="#e6e6de"/><stop offset="1" stop-color="#b0afa4" stop-opacity="0"/>
 </radialGradient>
 <radialGradient id="face" cx="0.4" cy="0.3" r="0.7">
  <stop offset="0" stop-color="#85766e"/><stop offset="0.5" stop-color="#6a5a52"/><stop offset="1" stop-color="#4d403a"/>
 </radialGradient>
<radialGradient id="lglow" gradientUnits="userSpaceOnUse" cx="60" cy="10" r="140">
  <stop offset="0" stop-color="#d8d7cc" stop-opacity="0.85"/><stop offset="0.5" stop-color="#bdbbae" stop-opacity="0.45"/><stop offset="1" stop-color="#bdbbae" stop-opacity="0"/>
 </radialGradient>
</defs>
<rect width="280" height="155" fill="url(#vbg)"/>
<rect width="280" height="155" fill="url(#vlight)"/>
<rect width="280" height="155" fill="url(#lglow)"/>
<path d="M0,14 L15,10 L13,60 L0,72 Z" fill="#34384f" opacity="0.9"/>
<ellipse cx="50" cy="4" rx="56" ry="41" fill="url(#lamp)"/>
<path d="M103,0 L109,0 L106,18 Z" fill="#cbbb7a" opacity="0.8"/>
<path d="M104,112 L154,112 L154,124 L132,155 L104,124 Z" fill="#5c4b43"/>
<ellipse cx="95" cy="88" rx="5.5" ry="11" fill="#9a6258"/>
<ellipse cx="168" cy="93" rx="5" ry="10" fill="#6e5850"/>
<path d="M98,70 C98,50 112,44 133,44 C156,44 168,54 168,74 L167,97 C166,116 152,126 133,126 C114,126 100,116 99,97 Z" fill="url(#face)"/>
<path d="M97,66 C94,48 100,36 112,31 L118,27 L124,29 L132,22 L140,26 L150,21 L154,28 L164,30 C174,38 176,52 172,70 L169,78 C166,62 158,55 140,53 C124,52 108,58 103,74 L99,80 Z" fill="#24221f"/>
<g fill="none" stroke="#2d2c31" stroke-width="1.1">
 <path d="M99,74 L128,73 L127,85 C124,89 107,89 103,86 Z" fill="rgba(175,190,240,0.22)"/>
 <path d="M137,73 L166,75 L163,87 C159,90 142,90 139,86 Z" fill="rgba(175,190,240,0.22)"/>
 <path d="M128,75 L137,75 M99,74 L94,75 M166,75 L171,77"/>
</g>
<path d="M121,113 C127,117 139,117 145,113" stroke="#84584f" stroke-width="2" opacity="0.7" fill="none"/>
<path d="M20,155 C32,138 75,130 104,124 L132,155 L154,124 C185,128 210,140 218,155 Z" fill="#cfcdd0"/>
<g fill="#8e8c9e" opacity="0.55"><circle cx="55" cy="143" r="2.2"/><circle cx="70" cy="138" r="2.2"/><circle cx="42" cy="150" r="2"/><circle cx="85" cy="134" r="2"/><circle cx="190" cy="138" r="2"/><circle cx="205" cy="145" r="2"/></g>
</svg>

<div class="abs" style="left:14px;top:636px;width:70px;height:28px;border-radius:4px;background:rgba(0,0,0,0.5)"></div>
<div class="abs" style="left:21px;top:643px;font-size:14px;color:#fff;line-height:16px;letter-spacing:-0.3px">Shilei Xie</div>
<!-- taskbar -->
<div id="task" class="abs"></div>
<svg class="abs" style="left:0;top:677px" width="1269" height="36" viewBox="0 677 1269 36">
 <rect x="258" y="677" width="42" height="36" fill="#2e2e2e"/>
 <g fill="#8fc4b4"><rect x="177" y="710" width="33" height="3"/><rect x="220" y="710" width="33" height="3"/><rect x="258" y="710" width="37" height="3"/><rect x="306" y="710" width="32" height="3"/></g>
 <!-- windows -->
 <g fill="#fff"><path d="M11,688 l8,-1.1 v8.3 h-8 z M20,686.7 l10.5,-1.4 v9.9 h-10.5 z M11,696.2 h8 v8.3 l-8,-1.1 z M20,696.2 h10.5 v9.9 l-10.5,-1.4 z"/></g>
 <!-- search -->
 <circle cx="65" cy="692.5" r="6.3" fill="none" stroke="#fff" stroke-width="1.7"/>
 <path d="M60.5,697.5 l-7,7" stroke="#fff" stroke-width="2"/>
 <!-- S -->
 <rect x="98.5" y="685.5" width="19" height="20" fill="#000"/>
 <path d="M113.8,689.8 C111.8,688.4 109.6,687.8 107.2,687.8 C103.6,687.8 101.8,689.6 101.8,691.9 C101.8,694.6 104.4,695.4 108,695.9 C112,696.5 114.2,697.9 114.2,700.9 C114.2,703.1 112.2,704.1 108,704.1 C105,704.1 102.8,703.3 101.2,702" fill="none" stroke="#fff" stroke-width="4.2"/>
 <!-- chrome -->
 <path d="M150.3,695.5 L142.07,690.75 A9.5,9.5 0 0 1 158.53,690.75 Z" fill="#ea4335"/>
 <path d="M150.3,695.5 L158.53,690.75 A9.5,9.5 0 0 1 150.3,705 Z" fill="#fbbc04"/>
 <path d="M150.3,695.5 L150.3,705 A9.5,9.5 0 0 1 142.07,690.75 Z" fill="#34a853"/>
 <circle cx="150.3" cy="695.5" r="4.6" fill="#fff"/><circle cx="150.3" cy="695.5" r="3.6" fill="#4285f4"/>
 <!-- folder -->
 <path d="M184,689 h7 l2,2 h9 v12 h-18 z" fill="#f7c844"/>
 <rect x="184" y="693" width="18" height="10" fill="#fcd66a"/>
 <path d="M188.5,703 v-5.5 h9 v5.5" fill="none" stroke="#2a7fd4" stroke-width="2"/>
 <!-- wechat -->
 <ellipse cx="233" cy="693" rx="7" ry="6" fill="#2aae67"/>
 <ellipse cx="239.5" cy="698.5" rx="6" ry="5" fill="#e8e8e8"/>
 <!-- teams -->
 <circle cx="283" cy="687.5" r="2.6" fill="#7b83eb"/><circle cx="287.5" cy="689" r="1.8" fill="#5059c9"/>
 <rect x="278" y="690" width="10" height="10" rx="1.5" fill="#7b83eb"/>
 <rect x="269" y="688.5" width="11" height="11" rx="1" fill="#4b53bc"/>
 <path d="M271.5,691 h6 v1.6 h-2.1 v5 h-1.8 v-5 h-2.1 z" fill="#fff"/>
 <rect x="275" y="698" width="13" height="6" rx="1" fill="#29d3c8"/>
 <text x="281.5" y="702.8" font-size="5" font-family="Liberation Sans" font-weight="bold" fill="#1b3a6b" text-anchor="middle">NEW</text>
 <!-- excel -->
 <rect x="315" y="686" width="16" height="18" rx="1" fill="#1d6f42"/>
 <rect x="321" y="686" width="10" height="18" rx="1" fill="#21a366"/>
 <rect x="311.5" y="689.5" width="11" height="11" rx="1" fill="#107c41"/>
 <text x="317" y="698.5" font-size="9" font-weight="bold" font-family="Liberation Sans" fill="#fff" text-anchor="middle">X</text>
 <!-- tray -->
 <path d="M1009,699 l7.5,-7.5 7.5,7.5" fill="none" stroke="#fff" stroke-width="1.3"/>
 <rect x="1039" y="692" width="14" height="8.5" rx="1" fill="none" stroke="#fff" stroke-width="1.2"/>
 <rect x="1041" y="694" width="10" height="4.5" fill="#fff"/>
 <rect x="1053.5" y="694.5" width="1.2" height="3.5" fill="#fff"/>
 <path d="M1035,690 h3 v3" fill="none" stroke="#fff" stroke-width="1"/>
 <path d="M1065.5,702 a12,12 0 0 1 12,-12 M1069,702 a8.5,8.5 0 0 1 8.5,-8.5 M1072.5,702 a5,5 0 0 1 5,-5" fill="none" stroke="#fff" stroke-width="1.2" opacity="0.8"/>
 <circle cx="1078" cy="701.5" r="1.3" fill="#fff"/>
 <rect x="1124" y="688" width="17" height="15" fill="#fff"/>
 <path d="M1221,686.5 h19.5 v14 h-7 l-2.7,3 -2.7,-3 h-7.1 z" fill="#fff"/>
 <path d="M1224.5,690.5 h12.5 M1224.5,693.5 h12.5 M1224.5,696.5 h8" stroke="#111" stroke-width="1.2"/>
 <rect x="1263" y="677" width="1" height="36" fill="#555"/>
</svg>
<div class="abs" style="left:1089px;top:685px;font-size:19px;color:#fff;line-height:20px">英</div>
<div class="abs" style="left:1125px;top:688px;font-size:14px;color:#111;line-height:15px;font-weight:bold">拼</div>
<div class="abs" style="left:1166px;top:688px;font-size:15px;color:#fff;line-height:17px">9:22</div>

</body></html>
